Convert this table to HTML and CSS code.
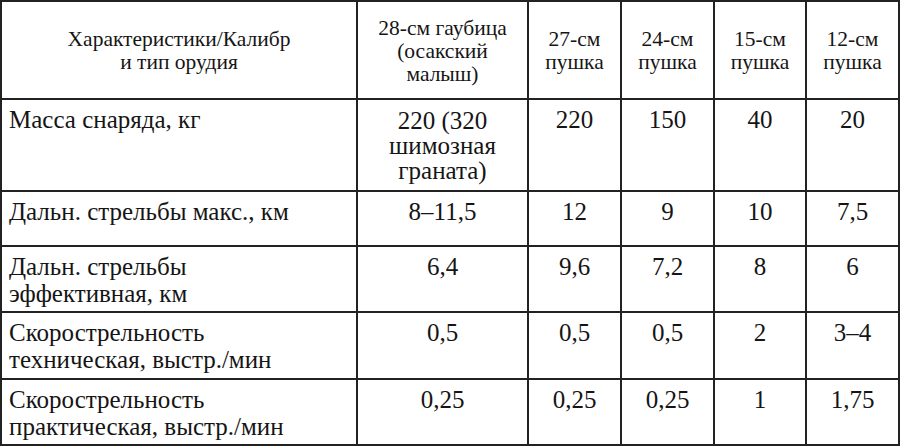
FILE: index.html
```html
<!DOCTYPE html>
<html lang="ru">
<head>
<meta charset="utf-8">
<link rel="stylesheet" href="styles.css">
</head>
<body>
<div class="spec">
  <div class="cell head">Характеристики/Калибр<br>и тип орудия</div>
  <div class="cell head">28-см гаубица<br>(осакский<br>малыш)</div>
  <div class="cell head">27-см<br>пушка</div>
  <div class="cell head">24-см<br>пушка</div>
  <div class="cell head">15-см<br>пушка</div>
  <div class="cell head">12-см<br>пушка</div>

  <div class="cell name">Масса снаряда, кг</div>
  <div class="cell val tight">220 (320<br>шимозная<br>граната)</div>
  <div class="cell val">220</div>
  <div class="cell val">150</div>
  <div class="cell val">40</div>
  <div class="cell val">20</div>

  <div class="cell name">Дальн. стрельбы макс., км</div>
  <div class="cell val">8–11,5</div>
  <div class="cell val">12</div>
  <div class="cell val">9</div>
  <div class="cell val">10</div>
  <div class="cell val">7,5</div>

  <div class="cell name">Дальн. стрельбы<br>эффективная, км</div>
  <div class="cell val">6,4</div>
  <div class="cell val">9,6</div>
  <div class="cell val">7,2</div>
  <div class="cell val">8</div>
  <div class="cell val">6</div>

  <div class="cell name">Скорострельность<br>техническая, выстр./мин</div>
  <div class="cell val">0,5</div>
  <div class="cell val">0,5</div>
  <div class="cell val">0,5</div>
  <div class="cell val">2</div>
  <div class="cell val">3–4</div>

  <div class="cell name">Скорострельность<br>практическая, выстр./мин</div>
  <div class="cell val">0,25</div>
  <div class="cell val">0,25</div>
  <div class="cell val">0,25</div>
  <div class="cell val">1</div>
  <div class="cell val">1,75</div>
</div>
</body>
</html>
```

FILE: styles.css
```css
html, body {
  margin: 0;
  padding: 0;
  background: #ffffff;
}

body {
  font-family: "Liberation Serif", "Times New Roman", serif;
}

.spec {
  display: grid;
  grid-template-columns: 356px 171px 93px 93px 92px 93px;
  grid-template-rows: 98px 92px 55px 66px 67px 66px;
  width: 900px;
  box-sizing: border-box;
  border-top: 2px solid #222222;
  border-left: 2px solid #222222;
  color: #151515;
  font-family: "Liberation Serif", "Times New Roman", serif;
}

.cell {
  border-right: 2px solid #222222;
  border-bottom: 2px solid #222222;
  font-size: 25px;
  line-height: 26px;
  padding-top: 7px;
}

.head {
  display: flex;
  align-items: center;
  justify-content: center;
  text-align: center;
  font-size: 21.5px;
  line-height: 23px;
  padding-top: 2px;
}

.name {
  text-align: left;
  padding-left: 7px;
  line-height: 27px;
  padding-top: 6px;
}

.val {
  text-align: center;
}

.tight {
  line-height: 25px;
  padding-top: 8px;
}
```
